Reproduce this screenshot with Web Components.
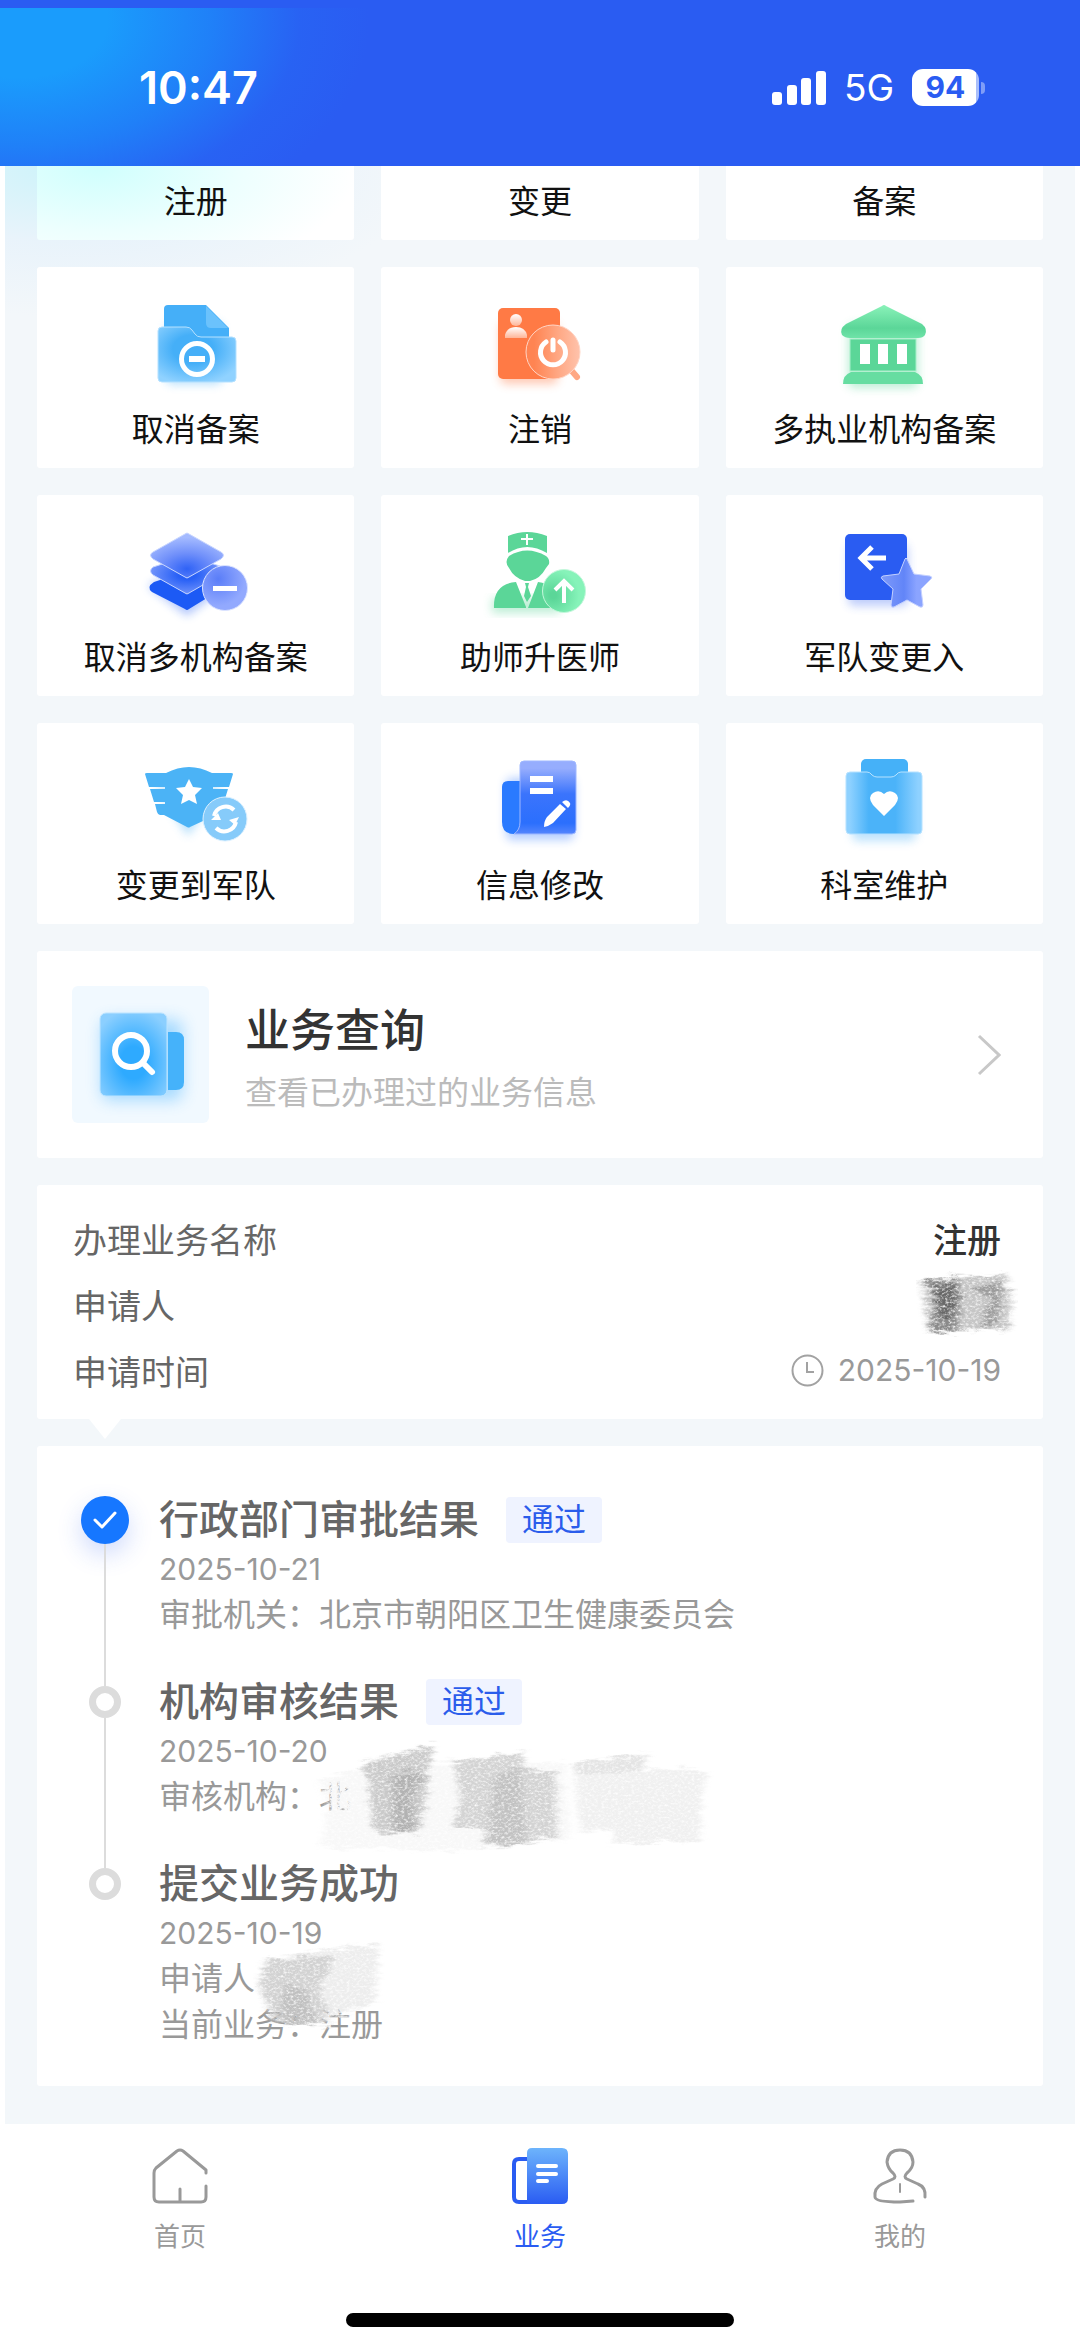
<!DOCTYPE html>
<html lang="zh-CN">
<head>
<meta charset="UTF-8">
<meta name="viewport" content="width=device-width, initial-scale=1.0">
<title>业务</title>
<style>
:root {
    --blue: #2A5CF2;
    --page: #F3F7FA;
    --text: #333333;
    --text-2: #666666;
    --text-3: #999999;
    --line: #DCDCDC;
}

body {
    margin: 0;
    background: #FFFFFF;
    color: var(--text);
    font-family: Inter, "Noto Sans CJK SC", sans-serif;
}
</style>
</head>
<body>
<status-bar time="10:47" network="5G" battery="94"></status-bar>

<page-body>
    <service-grid>
        <service-card class="cut tint" label="注册"></service-card>
        <service-card class="cut" label="变更"></service-card>
        <service-card class="cut" label="备案"></service-card>
        <service-card icon="folder" label="取消备案"></service-card>
        <service-card icon="logout" label="注销"></service-card>
        <service-card icon="bank" label="多执业机构备案"></service-card>
        <service-card icon="layers" label="取消多机构备案"></service-card>
        <service-card icon="doctor" label="助师升医师"></service-card>
        <service-card icon="armyIn" label="军队变更入"></service-card>
        <service-card icon="badge" label="变更到军队"></service-card>
        <service-card icon="edit" label="信息修改"></service-card>
        <service-card icon="clipboard" label="科室维护"></service-card>
    </service-grid>

    <query-entry heading="业务查询" hint="查看已办理过的业务信息"></query-entry>

    <apply-summary>
        <summary-row label="办理业务名称"><strong>注册</strong></summary-row>
        <summary-row label="申请人"><ink-smudge kind="name"></ink-smudge></summary-row>
        <summary-row label="申请时间" clock>2025-10-19</summary-row>
    </apply-summary>

    <progress-list>
        <progress-step done heading="行政部门审批结果" tag="通过" date="2025-10-21">
            <div>审批机关：北京市朝阳区卫生健康委员会</div>
        </progress-step>
        <progress-step heading="机构审核结果" tag="通过" date="2025-10-20">
            <div>审核机构：北</div>
            <ink-smudge slot="smudge" kind="org"></ink-smudge>
        </progress-step>
        <progress-step last heading="提交业务成功" date="2025-10-19">
            <div>申请人</div>
            <div>当前业务：注册</div>
            <ink-smudge slot="smudge" kind="applicant"></ink-smudge>
        </progress-step>
    </progress-list>
</page-body>

<tab-bar active="work"></tab-bar>

<script>
/* ── 图标 ─────────────────────────────────────────────── */
const STAR = 'M0 -13 L4 -5 L13 -4 L6 3 L8 12 L0 8 L-8 12 L-6 3 L-13 -4 L-4 -5 Z';

const ICONS = {
    folder: `
        <defs>
            <radialGradient id="g" cx=".45" cy=".4" r=".65">
                <stop offset=".4" stop-color="#45AFF8"/><stop offset="1" stop-color="#90D2FF"/>
            </radialGradient>
        </defs>
        <rect x="30" y="24" width="56" height="62" rx="6" fill="#45AFF8" opacity=".4" filter="url(#glow)"/>
        <path d="M32 7 H70 L93 30 V44 H28 V11 Q28 7 32 7 Z" fill="#45AFF8"/>
        <path d="M70 8 L92 30 H75 Q70 30 70 25 Z" fill="#6BC2FC"/>
        <path d="M26 29 H50 Q54 29 56 32 L59 36 Q61 39 65 39 H96 Q100 39 100 43 V80 Q100 84 96 84 H26 Q22 84 22 80 V33 Q22 29 26 29 Z"
              fill="url(#g)" stroke="#B5E1FF"/>
        <circle cx="61" cy="61" r="15.5" fill="none" stroke="#FFF" stroke-width="5"/>
        <rect x="53" y="58" width="16" height="6" fill="#FFF"/>`,
    logout: `
        <defs>
            <linearGradient id="g" x1="0" x2="1">
                <stop offset=".15" stop-color="#FF8452"/><stop offset=".6" stop-color="#FFA884"/><stop offset="1" stop-color="#FFC3AC"/>
            </linearGradient>
            <linearGradient id="p" x2="0" y2="1">
                <stop stop-color="#FFF"/><stop offset="1" stop-color="#FFB597"/>
            </linearGradient>
        </defs>
        <rect x="20" y="24" width="58" height="62" rx="6" fill="#FF7A45" opacity=".4" filter="url(#glow)"/>
        <rect x="18" y="10" width="62" height="71" rx="5" fill="#FF7A45"/>
        <circle cx="36" cy="22" r="6" fill="url(#p)"/>
        <path d="M25 40 V37 Q27 29 36 29 Q45 29 47 37 V40 Z" fill="url(#p)"/>
        <path d="M91 72 L97 79" stroke="#FFA884" stroke-width="6" stroke-linecap="round"/>
        <circle cx="73" cy="54" r="27" fill="url(#g)" stroke="#FFD5C5"/>
        <path d="M66 44 A12.5 12.5 0 1 0 80 44" fill="none" stroke="#FFF" stroke-width="5" stroke-linecap="round"/>
        <path d="M73 42 V52" stroke="#FFF" stroke-width="5" stroke-linecap="round"/>`,
    bank: `
        <defs>
            <linearGradient id="g" x2="0" y2="1">
                <stop stop-color="#8AF2B9"/><stop offset=".7" stop-color="#5BD698"/><stop offset="1" stop-color="#6FE3A8"/>
            </linearGradient>
        </defs>
        <rect x="24" y="26" width="70" height="64" rx="6" fill="#5BD698" opacity=".4" filter="url(#glow)"/>
        <path d="M58 8 Q60 6 62 8 L98 26 Q104 31 101 37 Q99 40 94 40 H26 Q21 40 18 37 Q15 31 22 26 Z" fill="url(#g)"/>
        <rect x="26" y="41" width="66" height="32" fill="#5BD698" stroke="#A9F0CB"/>
        <path d="M36 46 h10 v20 h-10 Z M54 46 h10 v20 h-10 Z M73 46 h10 v20 h-10 Z" fill="#FFF"/>
        <path d="M27 74 H91 Q99 77 99 86 H19 Q19 77 27 74 Z" fill="#66DDA1"/>`,
    layers: `
        <defs>
            <radialGradient id="g" cx=".5" cy=".8" r=".7">
                <stop stop-color="#2F62F6"/><stop offset=".5" stop-color="#6F8FFA"/><stop offset="1" stop-color="#A4BAFF"/>
            </radialGradient>
            <radialGradient id="m" cx=".5" cy=".5" r=".6">
                <stop offset=".2" stop-color="#2860F6"/><stop offset="1" stop-color="#829FFC"/>
            </radialGradient>
            <radialGradient id="c" cx=".35" cy=".3" r=".6">
                <stop stop-color="#5A7DF8"/><stop offset="1" stop-color="#92A9FE"/>
            </radialGradient>
        </defs>
        <path d="M12 60 L51 40 L88 62 L51 90 Z" fill="#1C5AF5" opacity=".35" filter="url(#glow)"/>
        <path d="M18 56 Q10 61 16 66 L49 83 Q51 85 53 83 L84 64 L51 45 Z" fill="#1C5AF5"/>
        <path d="M17 41 Q12 45 17 49 L49 67 Q51 69 53 67 L86 48 Q90 44 84 40 L51 30 Z" fill="url(#m)" stroke="#C8D6FF"/>
        <path d="M49 8 Q51 6 53 8 L85 26 Q90 29 85 33 L53 51 Q51 53 49 51 L17 33 Q12 29 17 26 Z" fill="url(#g)" stroke="#C8D6FF"/>
        <circle cx="89" cy="62" r="22.5" fill="url(#c)" stroke="#DCE4FF"/>
        <rect x="77" y="60" width="24" height="5" fill="#FFF"/>`,
    doctor: `
        <defs>
            <radialGradient id="c" cx=".25" cy=".6" r=".75">
                <stop offset=".1" stop-color="#5BD698"/><stop offset=".8" stop-color="#86F3B9"/>
            </radialGradient>
        </defs>
        <path d="M12 72 H80 V87 H12 Z" fill="#5BD698" opacity=".4" filter="url(#glow)"/>
        <path d="M28 10 Q47 2 67 10 V27 Q47 15 28 27 Z" fill="#5BD698"/>
        <path d="M47 8 V19 M41 13 H53" stroke="#FFF" stroke-width="2"/>
        <path d="M29 30 Q47 19 66 30 Q70 33 69 38 L66 42 Q60 53 50 55 H45 Q34 52 29 42 Q24 36 29 30 Z" fill="#5BD698"/>
        <path d="M14 82 Q13 58 36 56 L46 81 V82 Z M58 56 Q76 58 80 82 H48 Z" fill="#5BD698"/>
        <path d="M45 57 H49 L48 61 L51 70 L47 76 L44 70 L46 61 Z" fill="#5BD698"/>
        <circle cx="84" cy="65" r="21.5" fill="url(#c)" stroke="#C3F7DB"/>
        <path d="M84 77 V56 M75 64 L84 55 L93 64" fill="none" stroke="#FFF" stroke-width="4"/>`,
    armyIn: `
        <defs>
            <linearGradient id="g" x1="0" x2="1">
                <stop stop-color="#7E9AFA"/><stop offset=".45" stop-color="#6285F8"/><stop offset=".7" stop-color="#8BA4FF"/><stop offset="1" stop-color="#8BA4FF"/>
            </linearGradient>
        </defs>
        <rect x="24" y="18" width="60" height="62" rx="6" fill="#2A5CF2" opacity=".3" filter="url(#glow)"/>
        <rect x="21" y="8" width="62" height="66" rx="5" fill="#2A5CF2"/>
        <path d="M62 32 H38 M48 21 L37 32 L48 43" fill="none" stroke="#FFF" stroke-width="5"/>
        <path d="M83 33 L90 48 L106 50 Q109 51 107 53 L97 63 L99 79 Q99 82 96 81 L83 74 L70 81 Q67 82 67 79 L69 63 L58 53 Q56 51 59 50 L75 48 L81 33 Q82 31 83 33 Z"
              fill="url(#g)" stroke="#C4D1FF"/>`,
    badge: `
        <path d="M20 32 H86 L52 82 Z" fill="#45AFF5" opacity=".4" filter="url(#glow)"/>
        <path d="M9 20 Q9 19 11 19 H30 Q53 7 76 19 H95 Q97 19 97 20 L93 33 H77 V35 H92 L84 61 H80 L54 73 Q53 74 51 73 L28 61 H24 Q22 61 21 58 L19 50 H29 V48 H18 L14 35 H29 V33 H13 Z" fill="#4BB3F6"/>
        <path d="${STAR}" transform="translate(53 38)" fill="#FFF"/>
        <circle cx="89" cy="65" r="22" fill="#86CBFA" stroke="#DDF1FF"/>
        <path d="M78 62 A12 12 0 0 1 98 56 M100 68 A12 12 0 0 1 80 74" fill="none" stroke="#FFF" stroke-width="4"/>
        <path d="M75 66 L85 66 L82 59 Z M103 63 L93 66 L99 71 Z" fill="#FFF"/>`,
    edit: `
        <defs>
            <linearGradient id="g" x2="0" y2="1">
                <stop offset=".1" stop-color="#96ADFD"/><stop offset=".45" stop-color="#3B74FC"/><stop offset=".85" stop-color="#2B6FFD"/><stop offset="1" stop-color="#5485FD"/>
            </linearGradient>
        </defs>
        <rect x="26" y="24" width="68" height="62" rx="6" fill="#2A74FF" opacity=".35" filter="url(#glow)"/>
        <path d="M28 27 H42 V72 Q40 80 34 80 Q22 80 22 68 V33 Q22 27 28 27 Z" fill="#2A7AFF"/>
        <path d="M44 7 H92 Q96 7 96 11 V76 Q96 80 92 80 H34 Q40 76 40 68 V11 Q40 7 44 7 Z" fill="url(#g)" stroke="#9FB8FF"/>
        <path d="M50 22 h23 v6 h-23 Z M50 34 h23 v6 h-23 Z" fill="#FFF"/>
        <path d="M64 73 Q64 67 67 63 L80 50 L86 55 L73 69 Q69 72 64 73 Z M82 48 Q87 44 90 49 Q91 51 88 54 Z" fill="#FFF"/>`,
    clipboard: `
        <defs>
            <linearGradient id="g" x1="0" x2="1">
                <stop offset=".05" stop-color="#8ED1FF"/><stop offset=".3" stop-color="#4BB3F9"/><stop offset=".65" stop-color="#4BB3F9"/><stop offset=".95" stop-color="#8ED1FF"/>
            </linearGradient>
        </defs>
        <rect x="28" y="26" width="64" height="61" rx="6" fill="#45AFF8" opacity=".35" filter="url(#glow)"/>
        <rect x="37" y="5" width="47" height="24" rx="5" fill="#45B1F8"/>
        <path d="M26 18 H43 Q46 18 48 21 Q50 23 53 23 H67 Q70 23 72 21 Q74 18 77 18 H94 Q98 18 98 22 V76 Q98 80 94 80 H26 Q22 80 22 76 V22 Q22 18 26 18 Z"
              fill="url(#g)" stroke="#B7E2FF"/>
        <path d="M60 62 L49 51 Q43 43 49 39 Q55 35 60 40 Q65 35 71 39 Q77 43 71 51 Z" fill="#FFF"/>`,
};

class ServiceIcon extends HTMLElement {
    connectedCallback() {
        this.attachShadow({ mode: 'open' }).innerHTML = `
<style>
:host { display: block; width: 120px; height: 100px; }
svg { display: block; }
</style>
<svg width="120" height="100" viewBox="0 0 120 100" aria-hidden="true">
    <filter id="glow" x="-30%" y="-30%" width="160%" height="160%"><feGaussianBlur stdDeviation="5"/></filter>
    ${ICONS[this.getAttribute('name')]}
</svg>`;
    }
}

/* ── 状态栏 ───────────────────────────────────────────── */
class StatusBar extends HTMLElement {
    connectedCallback() {
        this.attachShadow({ mode: 'open' }).innerHTML = `
<style>
:host {
    display: flex;
    align-items: center;
    justify-content: space-between;
    box-sizing: border-box;
    height: 166px;
    padding: 9px 95px 0 139px;
    color: #FFFFFF;
    background:
        linear-gradient(var(--blue), var(--blue)) top / 100% 8px no-repeat,
        radial-gradient(ellipse 350px 230px at 20px 20px, #1A9CFC 25%, rgba(28, 140, 250, 0.75) 55%, rgba(36, 112, 246, 0.3) 80%, rgba(42, 92, 242, 0) 100%),
        var(--blue);
}
.time { font-size: 45px; font-weight: 600; line-height: 52px; }
.right { display: flex; align-items: center; gap: 18px; }
.net { font-size: 37px; line-height: 44px; }
.battery { display: flex; align-items: center; gap: 2px; }
.level {
    box-sizing: border-box;
    width: 67px;
    height: 37px;
    border-radius: 11px;
    background: linear-gradient(90deg, #FFFFFF 64px, #A9BEFA 64px);
    color: var(--blue);
    font-size: 30px;
    font-weight: 700;
    line-height: 37px;
    text-align: center;
}
.nub { width: 4px; height: 12px; border-radius: 0 4px 4px 0; background: #7F9DF7; }
</style>
<span class="time">${this.getAttribute('time')}</span>
<div class="right">
    <svg width="54" height="34" viewBox="0 0 54 34" fill="#FFF" aria-hidden="true">
        <rect y="21" width="10" height="13" rx="3"/>
        <rect x="15" y="14" width="10" height="20" rx="3"/>
        <rect x="29" y="7" width="10" height="27" rx="3"/>
        <rect x="44" width="10" height="34" rx="3"/>
    </svg>
    <span class="net">${this.getAttribute('network')}</span>
    <div class="battery">
        <span class="level">${this.getAttribute('battery')}</span>
        <span class="nub"></span>
    </div>
</div>`;
    }
}

/* ── 页面主体 ─────────────────────────────────────────── */
class PageBody extends HTMLElement {
    connectedCallback() {
        this.attachShadow({ mode: 'open' }).innerHTML = `
<style>
:host { display: block; padding: 0 5px; }
main {
    display: flex;
    flex-direction: column;
    gap: 27px;
    padding: 0 32px 38px;
    background:
        radial-gradient(ellipse 360px 150px at 60px 0, #CDF3FA 0%, rgba(230, 242, 251, 0.8) 50%, rgba(243, 247, 250, 0) 100%) no-repeat,
        var(--page);
}
</style>
<main><slot></slot></main>`;
    }
}

class ServiceGrid extends HTMLElement {
    connectedCallback() {
        this.attachShadow({ mode: 'open' }).innerHTML = `
<style>
:host {
    display: grid;
    grid-template-columns: repeat(3, 1fr);
    gap: 27px;
}
</style>
<slot></slot>`;
    }
}

class ServiceCard extends HTMLElement {
    connectedCallback() {
        const icon = this.getAttribute('icon');
        this.attachShadow({ mode: 'open' }).innerHTML = `
<style>
:host { display: block; }
a {
    display: flex;
    flex-direction: column;
    align-items: center;
    gap: 10px;
    padding: 31px 0 16px;
    border-radius: 3px;
    background: #FFFFFF;
    color: #111111;
    font-size: 32px;
    line-height: 44px;
    text-decoration: none;
}
/* 首行被标题栏遮住，只露出文字 */
:host(.cut) a { padding-top: 14px; border-radius: 0 0 3px 3px; }
:host(.tint) a {
    background: radial-gradient(ellipse 260px 120px at 60px 0, #CFFFFD 0%, #EDFFFE 55%, #FFFFFF 100%);
}
</style>
<a href="#">
    ${icon ? `<service-icon name="${icon}"></service-icon>` : ''}
    <span>${this.getAttribute('label')}</span>
</a>`;
    }
}

/* ── 业务查询入口 ─────────────────────────────────────── */
class QueryEntry extends HTMLElement {
    connectedCallback() {
        this.attachShadow({ mode: 'open' }).innerHTML = `
<style>
:host { display: block; }
a {
    display: flex;
    align-items: center;
    gap: 36px;
    padding: 35px 42px 35px 35px;
    border-radius: 3px;
    background: #FFFFFF;
    color: var(--text);
    text-decoration: none;
}
.pic { display: block; border-radius: 6px; background: #F1F9FF; }
.text { flex: 1; display: flex; flex-direction: column; gap: 8px; padding-top: 8px; }
.title { font-size: 45px; font-weight: 500; line-height: 60px; }
.hint { color: #BBBBBB; font-size: 32px; line-height: 48px; }
</style>
<a href="#">
    <svg class="pic" width="137" height="137" viewBox="0 0 137 137" aria-hidden="true">
        <defs>
            <radialGradient id="g" cx=".5" cy=".6" r=".65">
                <stop offset=".3" stop-color="#2EAAFF"/><stop offset="1" stop-color="#8BCFFF"/>
            </radialGradient>
            <filter id="glow" x="-30%" y="-30%" width="160%" height="160%"><feGaussianBlur stdDeviation="8"/></filter>
        </defs>
        <rect x="30" y="34" width="80" height="80" rx="8" fill="#45B2FF" opacity=".45" filter="url(#glow)"/>
        <path d="M96 46 H104 Q112 46 112 54 V96 Q112 104 104 104 H96 Z" fill="#45B2FA"/>
        <rect x="28" y="27" width="67" height="83" rx="6" fill="url(#g)" stroke="#BDE4FF"/>
        <circle cx="59" cy="65" r="16" fill="none" stroke="#FFF" stroke-width="6"/>
        <path d="M71 77 L80 86" stroke="#FFF" stroke-width="6" stroke-linecap="round"/>
    </svg>
    <span class="text">
        <span class="title">${this.getAttribute('heading')}</span>
        <span class="hint">${this.getAttribute('hint')}</span>
    </span>
    <svg width="24" height="42" viewBox="0 0 24 42" fill="none" stroke="#C8C8C8" stroke-width="3" aria-hidden="true">
        <path d="M2 2 L22 21 L2 40"/>
    </svg>
</a>`;
    }
}

/* ── 申请信息 ─────────────────────────────────────────── */
class ApplySummary extends HTMLElement {
    connectedCallback() {
        this.attachShadow({ mode: 'open' }).innerHTML = `
<style>
:host {
    display: block;
    position: relative;
    padding: 20px 42px 16px 36px;
    border-radius: 3px;
    background: #FFFFFF;
}
/* 指向进度列表的小三角 */
:host::after {
    content: '';
    position: absolute;
    top: 100%;
    left: 52px;
    border: 16px solid transparent;
    border-top: 20px solid #FFFFFF;
    border-bottom: 0;
}
</style>
<slot></slot>`;
    }
}

class SummaryRow extends HTMLElement {
    connectedCallback() {
        const clock = this.hasAttribute('clock') ? `
            <svg width="33" height="33" viewBox="0 0 33 33" fill="none" stroke="#A2A2A2" stroke-width="2" aria-hidden="true">
                <circle cx="16.5" cy="16.5" r="15"/>
                <path d="M16 8 V18 H23"/>
            </svg>` : '';
        this.attachShadow({ mode: 'open' }).innerHTML = `
<style>
:host {
    display: flex;
    align-items: center;
    justify-content: space-between;
    height: 66px;
    font-size: 34px;
}
.label { color: var(--text-2); }
.value {
    display: flex;
    align-items: center;
    gap: 14px;
    color: var(--text-3);
    font-size: 30px;
}
::slotted(strong) { color: var(--text); font-size: 34px; font-weight: 500; }
::slotted(ink-smudge) { margin-right: -14px; }
</style>
<span class="label">${this.getAttribute('label')}</span>
<span class="value">${clock}<slot></slot></span>`;
    }
}

/* ── 涂抹遮挡 ─────────────────────────────────────────── */
const SMUDGES = {
    name: {
        width: 96,
        height: 64,
        shapes: `
            <path d="M2 10 L84 2 L94 24 L88 58 L10 60 Z" fill="#C6C6C6"/>
            <path d="M2 10 L38 4 L42 20 L38 58 L12 60 L16 24 Z" fill="#8A8A8A"/>
            <path d="M16 14 L34 12 L34 44 L22 46 Z" fill="#666666"/>
            <path d="M54 16 L84 8 L78 52 L62 54 L70 26 Z" fill="#9C9C9C"/>`,
    },
    org: {
        width: 400,
        height: 124,
        shapes: `
            <path d="M4 40 L60 26 L250 24 L256 100 L140 112 L4 108 L14 70 Z" fill="#F8F8F8"/>
            <path d="M258 24 L333 15 L318 30 L390 31 L385 102 L297 105 L298 89 L265 92 Z" fill="#F0F0F0"/>
            <path d="M258 24 L333 15 L326 32 L262 36 Z" fill="#E4E4E4"/>
            <path d="M48 25 L118 5 L113 35 L110 75 L102 95 L72 95 L57 89 L53 35 Z" fill="#CACACA"/>
            <path d="M78 36 L108 32 L98 56 L100 92 L78 92 Z" fill="#B2B2B2"/>
            <path d="M138 22 L210 13 L205 30 L240 32 L242 99 L168 107 L173 89 L138 89 L145 59 Z" fill="#D3D3D3"/>
            <path d="M180 36 L205 30 L210 104 L172 104 Z" fill="#C2C2C2"/>`,
    },
    applicant: {
        width: 130,
        height: 100,
        shapes: `
            <path d="M30 12 L122 2 L118 60 L70 78 L10 70 Z" fill="#EDEDED"/>
            <path d="M8 18 L76 14 L62 46 L74 84 L18 80 L2 44 Z" fill="#D2D2D2"/>
            <path d="M28 42 L48 46 L60 82 L22 82 Z" fill="#C0C0C0"/>`,
    },
};

class InkSmudge extends HTMLElement {
    connectedCallback() {
        const { width, height, shapes } = SMUDGES[this.getAttribute('kind')];
        this.attachShadow({ mode: 'open' }).innerHTML = `
<style>
:host { display: block; }
svg { display: block; overflow: visible; }
</style>
<svg width="${width}" height="${height}" viewBox="0 0 ${width} ${height}" aria-hidden="true">
    <filter id="grain" x="-5%" y="-10%" width="110%" height="120%" color-interpolation-filters="sRGB">
        <feGaussianBlur in="SourceGraphic" stdDeviation="3 1" result="soft"/>
        <feTurbulence type="fractalNoise" baseFrequency=".05 .25" numOctaves="3" seed="4" result="waves"/>
        <feDisplacementMap in="soft" in2="waves" scale="14" xChannelSelector="R" yChannelSelector="G" result="rough"/>
        <feTurbulence type="fractalNoise" baseFrequency=".3 .5" numOctaves="3" seed="9"/>
        <feColorMatrix values="0 0 0 0 0  0 0 0 0 0  0 0 0 0 0  2 0 0 0 -.12" result="alpha"/>
        <feComposite in="rough" in2="alpha" operator="in"/>
    </filter>
    <g filter="url(#grain)">${shapes}</g>
</svg>`;
    }
}

/* ── 办理进度 ─────────────────────────────────────────── */
class ProgressList extends HTMLElement {
    connectedCallback() {
        this.attachShadow({ mode: 'open' }).innerHTML = `
<style>
:host {
    display: block;
    padding: 48px 42px 38px 43px;
    border-radius: 3px;
    background: #FFFFFF;
}
</style>
<slot></slot>`;
    }
}

class ProgressStep extends HTMLElement {
    connectedCallback() {
        const tag = this.getAttribute('tag');
        const check = this.hasAttribute('done') ? `
            <svg width="24" height="18" viewBox="0 0 24 18" fill="none" stroke="#FFF" stroke-width="3"
                 stroke-linecap="round" stroke-linejoin="round" aria-hidden="true">
                <path d="M2 9 L9 16 L22 2"/>
            </svg>` : '';
        this.attachShadow({ mode: 'open' }).innerHTML = `
<style>
:host { display: flex; gap: 30px; }
.rail {
    display: flex;
    flex-direction: column;
    align-items: center;
    width: 49px;
}
.node {
    box-sizing: border-box;
    width: 32px;
    height: 32px;
    margin-top: 10px;
    border: 7px solid var(--line);
    border-radius: 50%;
}
:host([done]) .node {
    display: flex;
    align-items: center;
    justify-content: center;
    width: 48px;
    height: 48px;
    margin-top: 2px;
    border: 0;
    background: #1677FF;
    box-shadow: 0 10px 24px rgba(42, 92, 242, 0.22);
}
/* 连线伸到下一个节点的上沿 */
.rail::after {
    content: '';
    flex: 1;
    width: 2px;
    margin-bottom: -10px;
    background: var(--line);
}
:host([last]) .rail::after { display: none; }
.content {
    position: relative;
    flex: 1;
    padding-bottom: 38px;
    color: var(--text-3);
    font-size: 32px;
    line-height: 46px;
}
:host([last]) .content { padding-bottom: 0; }
.head { display: flex; align-items: center; gap: 27px; height: 52px; }
.title { margin: 0; color: var(--text-2); font-size: 40px; font-weight: 500; line-height: 52px; }
.tag {
    padding: 0 16px;
    border-radius: 4px;
    background: #EFF3FF;
    color: #2A5CEB;
}
.date { font-size: 30px; }
::slotted([slot="smudge"]) { position: absolute; }
::slotted([kind="org"]) { top: 63px; left: 156px; }
::slotted([kind="applicant"]) { top: 84px; left: 98px; }
</style>
<div class="rail"><div class="node">${check}</div></div>
<div class="content">
    <div class="head">
        <h3 class="title">${this.getAttribute('heading')}</h3>
        ${tag ? `<span class="tag">${tag}</span>` : ''}
    </div>
    <div class="date">${this.getAttribute('date')}</div>
    <slot></slot>
    <slot name="smudge"></slot>
</div>`;
    }
}

/* ── 底部导航 ─────────────────────────────────────────── */
class TabBar extends HTMLElement {
    connectedCallback() {
        const active = this.getAttribute('active');
        const TABS = [
            { id: 'home', label: '首页', icon: `
                <g fill="none" stroke="#999" stroke-width="3" stroke-linecap="round" stroke-linejoin="round">
                    <path d="M54 25 V22 L31 3 Q28 1 25 3 L4 20 Q2 22 2 25 V49 Q2 54 7 54 H49 Q54 54 54 49 V38"/>
                    <path d="M28 41 V53"/>
                </g>` },
            { id: 'work', label: '业务', icon: `
                <defs>
                    <linearGradient id="w" x2="0" y2="1">
                        <stop stop-color="#6DB4FC"/><stop offset="1" stop-color="#2A5CF2"/>
                    </linearGradient>
                </defs>
                <path d="M16 11 H7 Q2 11 2 16 V49 Q2 54 7 54 H20" fill="none" stroke="#2A5CF2" stroke-width="4"/>
                <path d="M20 0 H50 Q56 0 56 6 V50 Q56 56 50 56 H15 V5 Q15 0 20 0 Z" fill="url(#w)"/>
                <path d="M26 18 H44 M26 26 H44 M26 33 H35" stroke="#FFF" stroke-width="4" stroke-linecap="round"/>` },
            { id: 'mine', label: '我的', icon: `
                <g fill="none" stroke="#999" stroke-width="3" stroke-linecap="round" stroke-linejoin="round">
                    <path d="M53 49 Q54 39 46 36 L35 31 Q31 29 35 25 Q41 20 41 14 Q40 2 28 2 Q16 2 15 14 Q16 21 21 25 Q25 29 21 31 L10 36 Q2 40 3 49 Q3 54 28 54 L41 53"/>
                    <path d="M28 36 V44" stroke-width="2"/>
                </g>` },
        ];
        this.attachShadow({ mode: 'open' }).innerHTML = `
<style>
:host { display: block; padding: 24px 0 21px; background: #FFFFFF; }
nav { display: grid; grid-template-columns: repeat(3, 1fr); }
a {
    display: flex;
    flex-direction: column;
    align-items: center;
    gap: 13px;
    color: var(--text-3);
    font-size: 26px;
    line-height: 40px;
    text-decoration: none;
}
a.active { color: var(--blue); }
.indicator {
    width: 36%;
    height: 14px;
    margin: 56px auto 0;
    border-radius: 7px;
    background: #000000;
}
</style>
<nav>
    ${TABS.map(tab => `
    <a href="#" class="${tab.id === active ? 'active' : ''}">
        <svg width="56" height="56" viewBox="0 0 56 56" aria-hidden="true">${tab.icon}</svg>
        <span>${tab.label}</span>
    </a>`).join('')}
</nav>
<div class="indicator"></div>`;
    }
}

customElements.define('service-icon', ServiceIcon);
customElements.define('status-bar', StatusBar);
customElements.define('page-body', PageBody);
customElements.define('service-grid', ServiceGrid);
customElements.define('service-card', ServiceCard);
customElements.define('query-entry', QueryEntry);
customElements.define('apply-summary', ApplySummary);
customElements.define('summary-row', SummaryRow);
customElements.define('ink-smudge', InkSmudge);
customElements.define('progress-list', ProgressList);
customElements.define('progress-step', ProgressStep);
customElements.define('tab-bar', TabBar);
</script>
</body>
</html>
